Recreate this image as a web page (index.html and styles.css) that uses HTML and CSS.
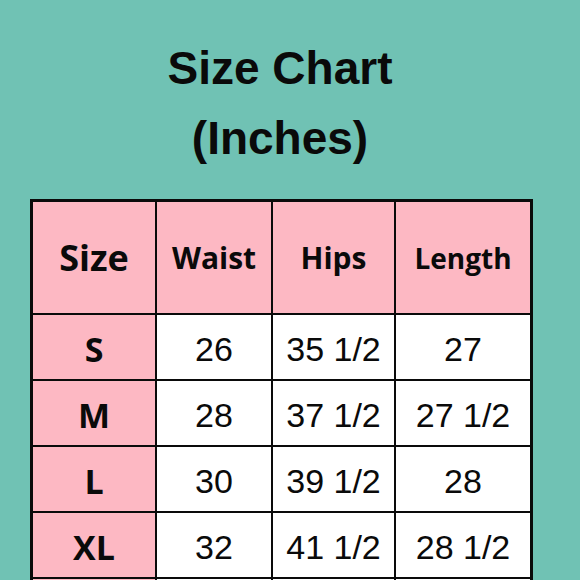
FILE: index.html
```html
<!DOCTYPE html>
<html>
<head>
<meta charset="utf-8">
<link rel="stylesheet" href="styles.css">
</head>
<body>
<div class="page">
  <h1 class="title">Size Chart<br>(Inches)</h1>
  <div class="chart">
    <div class="cell head size-head">Size</div>
    <div class="cell head">Waist</div>
    <div class="cell head">Hips</div>
    <div class="cell head small">Length</div>

    <div class="cell label">S</div>
    <div class="cell val">26</div>
    <div class="cell val">35 1/2</div>
    <div class="cell val">27</div>

    <div class="cell label">M</div>
    <div class="cell val">28</div>
    <div class="cell val">37 1/2</div>
    <div class="cell val">27 1/2</div>

    <div class="cell label">L</div>
    <div class="cell val">30</div>
    <div class="cell val">39 1/2</div>
    <div class="cell val">28</div>

    <div class="cell label">XL</div>
    <div class="cell val">32</div>
    <div class="cell val">41 1/2</div>
    <div class="cell val">28 1/2</div>

    <div class="cell label"></div>
    <div class="cell val"></div>
    <div class="cell val"></div>
    <div class="cell val"></div>
  </div>
</div>
</body>
</html>
```

FILE: styles.css
```css
html, body {
  margin: 0;
  padding: 0;
  width: 580px;
  height: 580px;
  overflow: hidden;
  background: #70c2b4;
}

.page {
  display: flex;
  flex-direction: column;
  align-items: flex-start;
}

.title {
  margin: 33px 0 0 0;
  width: 560px;
  text-align: center;
  font-family: "Liberation Sans", Arial, sans-serif;
  font-weight: bold;
  font-size: 46px;
  line-height: 70px;
  color: #0a0a0a;
}

.chart {
  margin: 26px 0 0 30px;
  display: grid;
  grid-template-columns: 122px 114px 121px 134px;
  grid-template-rows: 111px 64px 64px 64px 64px 64px;
  gap: 2px;
  padding: 3px;
  background: #0a0a0a;
}

.cell {
  display: flex;
  align-items: center;
  justify-content: center;
  background: #ffffff;
  color: #0a0a0a;
}

.head {
  background: #fdb8c3;
  font-family: "Open Sans", sans-serif;
  font-weight: bold;
  font-size: 30px;
}

.size-head {
  font-size: 36px;
}

.small {
  font-size: 28px;
}

.label {
  background: #fdb8c3;
  font-family: "Open Sans", sans-serif;
  font-weight: bold;
  font-size: 34px;
  padding-top: 4px;
}

.val {
  font-family: "Liberation Sans", Arial, sans-serif;
  font-size: 34px;
  padding-top: 5px;
}
```
